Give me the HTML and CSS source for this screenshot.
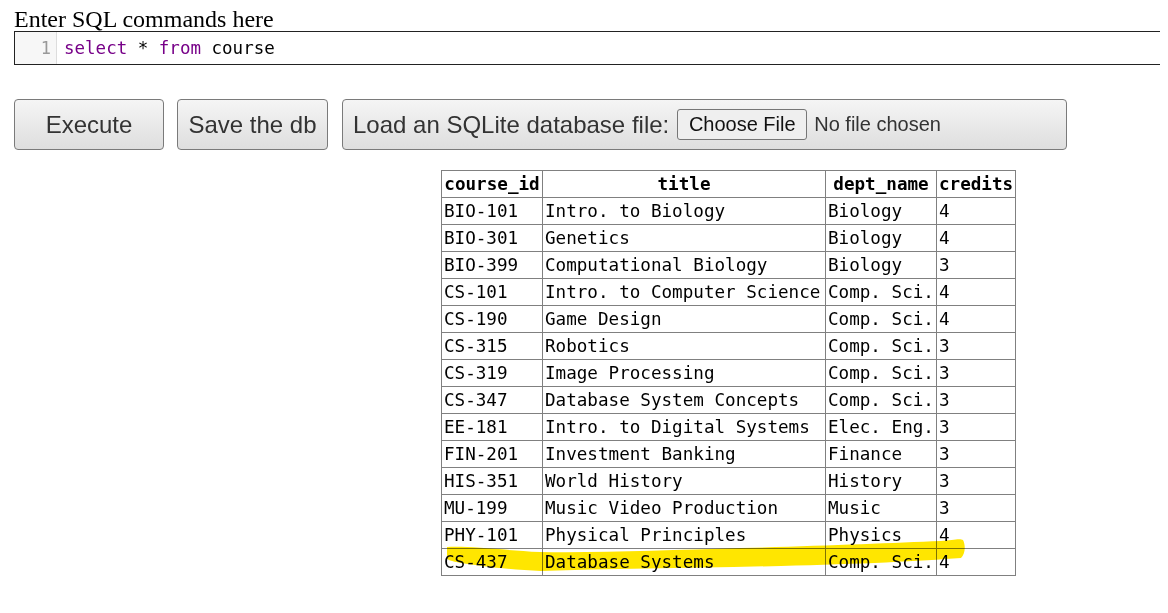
FILE: index.html
```html
<!DOCTYPE html>
<html lang="en">
<head>
<meta charset="utf-8">
<title>SQL</title>
<link rel="stylesheet" href="styles.css">
</head>
<body>
<div class="page">
  <div class="heading">Enter SQL commands here</div>
  <div class="editor">
    <div class="gutter">1</div>
    <div class="code"><span class="kw">select</span> * <span class="kw">from</span> course</div>
  </div>
  <div class="actions">
    <button class="btn btn-exec">Execute</button>
    <button class="btn btn-save">Save the db</button>
    <label class="btn btn-load">Load an SQLite database file:
      <span class="file">
        <span class="file-btn">Choose File</span>
        <span class="file-name">No file chosen</span>
      </span>
    </label>
  </div>
  <div class="result">
    <table class="grid">
      <colgroup>
        <col class="c1"><col class="c2"><col class="c3"><col class="c4">
      </colgroup>
      <thead>
        <tr><th>course_id</th><th>title</th><th>dept_name</th><th>credits</th></tr>
      </thead>
      <tbody>
        <tr><td>BIO-101</td><td>Intro. to Biology</td><td>Biology</td><td>4</td></tr>
        <tr><td>BIO-301</td><td>Genetics</td><td>Biology</td><td>4</td></tr>
        <tr><td>BIO-399</td><td>Computational Biology</td><td>Biology</td><td>3</td></tr>
        <tr><td>CS-101</td><td>Intro. to Computer Science</td><td>Comp. Sci.</td><td>4</td></tr>
        <tr><td>CS-190</td><td>Game Design</td><td>Comp. Sci.</td><td>4</td></tr>
        <tr><td>CS-315</td><td>Robotics</td><td>Comp. Sci.</td><td>3</td></tr>
        <tr><td>CS-319</td><td>Image Processing</td><td>Comp. Sci.</td><td>3</td></tr>
        <tr><td>CS-347</td><td>Database System Concepts</td><td>Comp. Sci.</td><td>3</td></tr>
        <tr><td>EE-181</td><td>Intro. to Digital Systems</td><td>Elec. Eng.</td><td>3</td></tr>
        <tr><td>FIN-201</td><td>Investment Banking</td><td>Finance</td><td>3</td></tr>
        <tr><td>HIS-351</td><td>World History</td><td>History</td><td>3</td></tr>
        <tr><td>MU-199</td><td>Music Video Production</td><td>Music</td><td>3</td></tr>
        <tr><td>PHY-101</td><td>Physical Principles</td><td>Physics</td><td>4</td></tr>
        <tr><td>CS-437</td><td>Database Systems</td><td>Comp. Sci.</td><td>4</td></tr>
      </tbody>
    </table>
    <svg class="marker" width="574" height="405" viewBox="0 0 574 405" aria-hidden="true">
      <path d="M6 377 C 30 376, 60 380, 99 382 C 160 383, 230 380, 300 378 C 380 376, 450 373, 500 371 C 512 370, 519 368, 522 370 C 525 376, 524 384, 520 388 C 480 391, 420 394, 340 396 C 250 398, 170 399, 100 401 C 70 400, 40 396, 20 393 C 10 391, 6 390, 6 388 Z" />
    </svg>
  </div>
</div>
</body>
</html>
```

FILE: styles.css
```css
body {
  margin: 8px;
  background: #ffffff;
  color: #000;
}
.page {
  padding: 0 0 0 6px;
}
.heading {
  font-family: "Liberation Serif", "Times New Roman", serif;
  font-size: 24px;
  line-height: 23px;
  color: #000;
}
.editor {
  display: flex;
  box-sizing: border-box;
  width: calc(100% + 8px);
  height: 34px;
  border: 1px solid #222;
  border-right: none;
  background: #fff;
}
.gutter {
  width: 42px;
  box-sizing: border-box;
  background: #f7f7f7;
  border-right: 1px solid #ddd;
  color: #999;
  text-align: right;
  padding-right: 5px;
  font-family: "DejaVu Sans Mono", monospace;
  font-size: 17px;
  line-height: 32px;
}
.code {
  padding-left: 7px;
  font-family: "DejaVu Sans Mono", monospace;
  font-size: 17.5px;
  line-height: 32px;
  color: #000;
  white-space: pre;
}
.kw {
  color: #770088;
}
.actions {
  display: flex;
  align-items: stretch;
  margin-top: 34px;
  height: 51px;
}
.btn {
  box-sizing: border-box;
  height: 51px;
  border: 1px solid #7a7a7a;
  border-radius: 4px;
  background: linear-gradient(#f5f5f5, #dedede);
  font-family: "Liberation Sans", Arial, sans-serif;
  font-size: 24px;
  color: #333;
  display: flex;
  align-items: center;
  padding: 0;
  margin: 0;
}
.btn-exec {
  width: 150px;
  justify-content: center;
}
.btn-save {
  width: 151px;
  margin-left: 13px;
  justify-content: center;
}
.btn-load {
  width: 725px;
  margin-left: 14px;
  padding-left: 10px;
}
.file {
  display: flex;
  align-items: center;
  margin-left: 8px;
  font-size: 20px;
}
.file-btn {
  box-sizing: border-box;
  height: 31px;
  width: 130px;
  display: flex;
  align-items: center;
  justify-content: center;
  border: 1px solid #767676;
  border-radius: 3px;
  background: #efefef;
  color: #111;
}
.file-name {
  margin-left: 7px;
  color: #333;
}
.result {
  position: relative;
  width: 574px;
  margin-top: 20px;
  margin-left: 427px;
}
.grid {
  border-collapse: collapse;
  table-layout: fixed;
  width: 574px;
  font-family: "DejaVu Sans Mono", monospace;
  font-size: 17.6px;
  color: #000;
}
.c1 { width: 101px; }
.c2 { width: 283px; }
.c3 { width: 111px; }
.c4 { width: 79px; }
.grid th,
.grid td {
  border: 1px solid #808080;
  padding: 1px 2px;
  line-height: 24px;
  height: 24px;
  text-align: left;
  white-space: nowrap;
  overflow: hidden;
}
.grid th {
  font-weight: bold;
  text-align: center;
}
.marker {
  position: absolute;
  left: 0;
  top: 0;
  overflow: visible;
  mix-blend-mode: multiply;
  pointer-events: none;
}
.marker path {
  fill: #ffe600;
}
```
